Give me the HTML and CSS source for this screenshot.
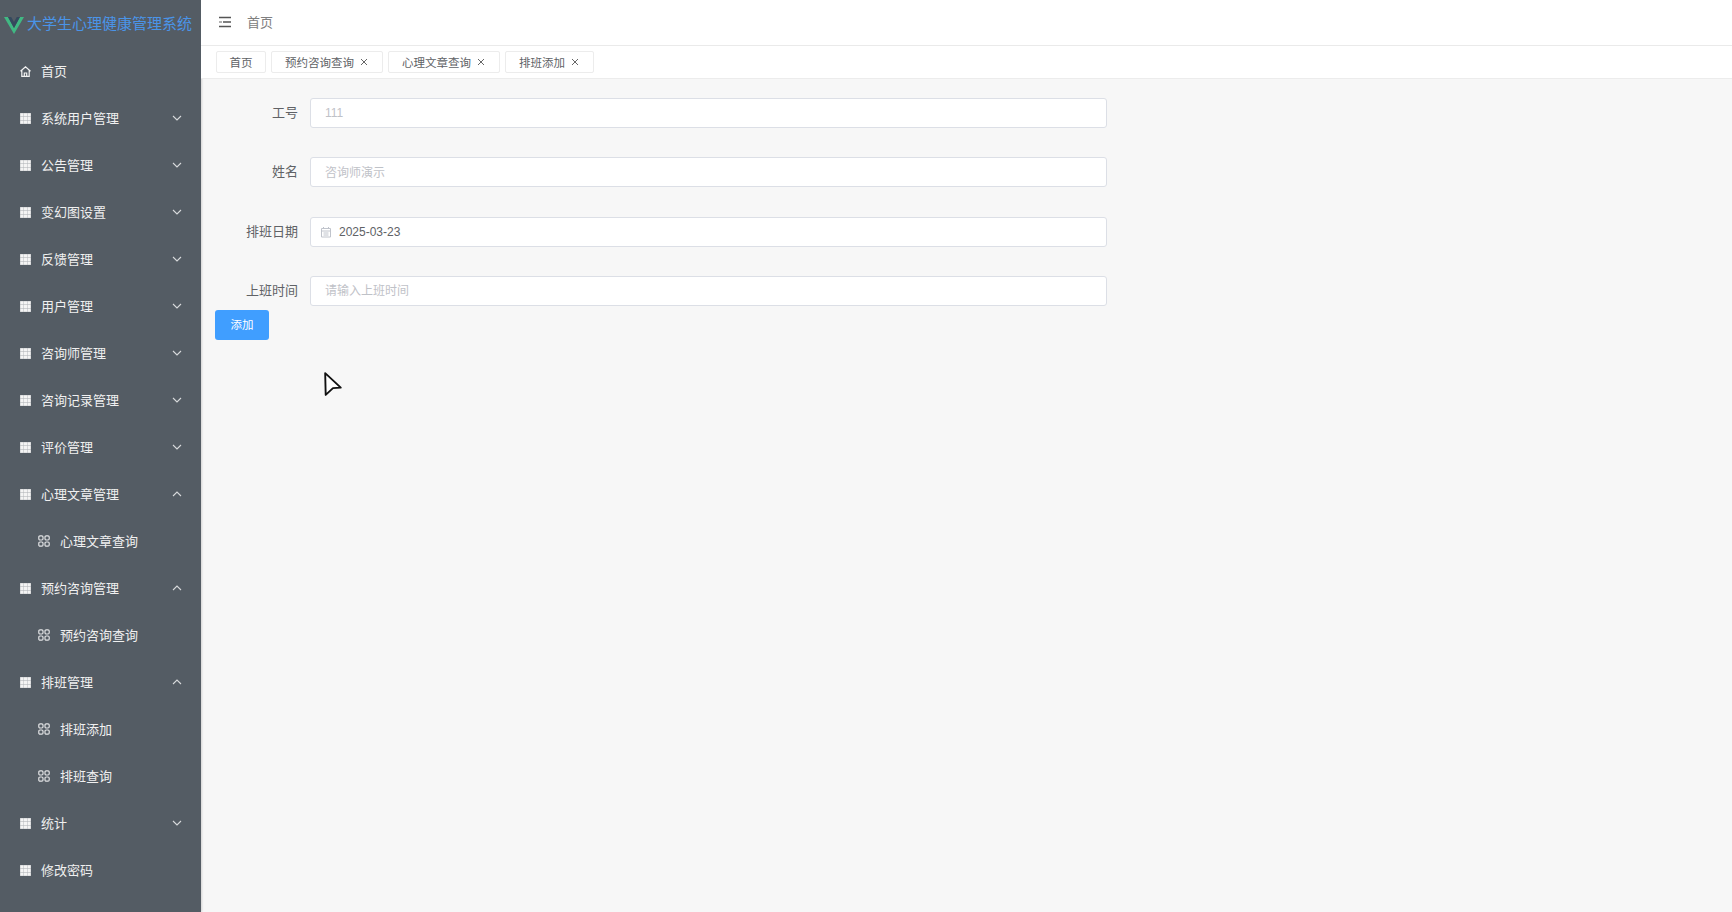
FILE: index.html
```html
<!DOCTYPE html>
<html lang="zh-CN">
<head>
<meta charset="utf-8">
<title>大学生心理健康管理系统</title>
<link rel="stylesheet" href="styles.css">
</head>
<body>
<svg class="defs" width="0" height="0" aria-hidden="true">
  <symbol id="grid" viewBox="0 0 11 11"><path d="M0 0h11v11H0z" fill="#a9adb1"/><path d="M.3 .3h3.200v3.200H.3zM3.900 .3h3.200v3.200H3.900zM7.500 .3h3.200v3.200H7.500zM.3 3.900h3.200v3.200H.3zM3.900 3.900h3.200v3.200H3.900zM7.500 3.900h3.200v3.200H7.500zM.3 7.500h3.200v3.200H.3zM3.900 7.500h3.200v3.200H3.900zM7.500 7.500h3.200v3.200H7.500z" fill="#f4f4f4"/></symbol>
  <symbol id="apps" viewBox="0 0 12 12"><g fill="none" stroke="#e2e3e5" stroke-width="1.200"><rect x=".8" y=".8" width="4.200" height="4.200" rx="1.200"/><rect x="7" y=".8" width="4.200" height="4.200" rx="1.200"/><rect x=".8" y="7" width="4.200" height="4.200" rx="1.200"/><rect x="7" y="7" width="4.200" height="4.200" rx="1.200"/></g></symbol>
  <symbol id="down" viewBox="0 0 10 6"><path d="M1 1l4 4 4-4" fill="none" stroke="#d8dadc" stroke-width="1.100"/></symbol>
  <symbol id="up" viewBox="0 0 10 6"><path d="M1 5l4-4 4 4" fill="none" stroke="#d8dadc" stroke-width="1.100"/></symbol>
  <symbol id="close" viewBox="0 0 8 8"><path d="M1 1l6 6M7 1L1 7" stroke="#666" stroke-width="1" fill="none"/></symbol>
</svg>
<div class="app">
  <aside class="sidebar">
    <div class="logo">
      <svg class="logo-mark" viewBox="0 0 20 17"><path d="M0 0h4l6 11 6-11h4L10 17z" fill="#41b883"/><path d="M4 0h3.200L10 5l2.800-5H16l-6 11z" fill="#35495e"/></svg>
      <span class="logo-text">大学生心理健康管理系统</span>
    </div>
    <nav class="menu">
      <a class="row"><svg class="ico" viewBox="0 0 11 11"><path d="M.5 5.300L5.500 .8l5 4.500M1.800 4.400v6h7.400v-6M4.300 10.200V7h2.400v3.200" fill="none" stroke="#f2f2f2" stroke-width="1.200"/></svg><span class="label">首页</span></a>
      <a class="row"><svg class="ico"><use href="#grid"/></svg><span class="label">系统用户管理</span><svg class="arrow"><use href="#down"/></svg></a>
      <a class="row"><svg class="ico"><use href="#grid"/></svg><span class="label">公告管理</span><svg class="arrow"><use href="#down"/></svg></a>
      <a class="row"><svg class="ico"><use href="#grid"/></svg><span class="label">变幻图设置</span><svg class="arrow"><use href="#down"/></svg></a>
      <a class="row"><svg class="ico"><use href="#grid"/></svg><span class="label">反馈管理</span><svg class="arrow"><use href="#down"/></svg></a>
      <a class="row"><svg class="ico"><use href="#grid"/></svg><span class="label">用户管理</span><svg class="arrow"><use href="#down"/></svg></a>
      <a class="row"><svg class="ico"><use href="#grid"/></svg><span class="label">咨询师管理</span><svg class="arrow"><use href="#down"/></svg></a>
      <a class="row"><svg class="ico"><use href="#grid"/></svg><span class="label">咨询记录管理</span><svg class="arrow"><use href="#down"/></svg></a>
      <a class="row"><svg class="ico"><use href="#grid"/></svg><span class="label">评价管理</span><svg class="arrow"><use href="#down"/></svg></a>
      <a class="row"><svg class="ico"><use href="#grid"/></svg><span class="label">心理文章管理</span><svg class="arrow"><use href="#up"/></svg></a>
      <a class="row sub"><svg class="ico"><use href="#apps"/></svg><span class="label">心理文章查询</span></a>
      <a class="row"><svg class="ico"><use href="#grid"/></svg><span class="label">预约咨询管理</span><svg class="arrow"><use href="#up"/></svg></a>
      <a class="row sub"><svg class="ico"><use href="#apps"/></svg><span class="label">预约咨询查询</span></a>
      <a class="row"><svg class="ico"><use href="#grid"/></svg><span class="label">排班管理</span><svg class="arrow"><use href="#up"/></svg></a>
      <a class="row sub"><svg class="ico"><use href="#apps"/></svg><span class="label">排班添加</span></a>
      <a class="row sub"><svg class="ico"><use href="#apps"/></svg><span class="label">排班查询</span></a>
      <a class="row"><svg class="ico"><use href="#grid"/></svg><span class="label">统计</span><svg class="arrow"><use href="#down"/></svg></a>
      <a class="row"><svg class="ico"><use href="#grid"/></svg><span class="label">修改密码</span></a>
    </nav>
  </aside>
  <main class="main">
    <header class="topbar">
      <svg class="fold" viewBox="0 0 14 12"><path d="M1 1.500h12M5 6h8M1 10.500h12" stroke="#555" stroke-width="1.300" fill="none"/><path d="M1 6h3" stroke="#888" stroke-width="1.300"/></svg>
      <span class="crumb">首页</span>
    </header>
    <div class="tabs">
      <span class="tab tab-home">首页</span>
      <span class="tab">预约咨询查询<svg class="tab-x"><use href="#close"/></svg></span>
      <span class="tab">心理文章查询<svg class="tab-x"><use href="#close"/></svg></span>
      <span class="tab">排班添加<svg class="tab-x"><use href="#close"/></svg></span>
    </div>
    <section class="content">
      <form class="form">
        <div class="field"><label class="field-label">工号</label><div class="input latin muted"><span class="input-text">111</span></div></div>
        <div class="field"><label class="field-label">姓名</label><div class="input muted"><span class="input-text">咨询师演示</span></div></div>
        <div class="field"><label class="field-label">排班日期</label><div class="input latin date"><svg class="cal" viewBox="0 0 12 12"><path d="M1.500 2.500h9v8.500h-9zM1.500 5h9M3.500 1v2M8.500 1v2M3.500 7h5M3.500 9h5" fill="none" stroke="#c0c4cc" stroke-width="1"/></svg><span class="input-text">2025-03-23</span></div></div>
        <div class="field"><label class="field-label">上班时间</label><div class="input muted"><span class="input-text">请输入上班时间</span></div></div>
      </form>
      <button class="btn" type="button">添加</button>
    </section>
    <svg class="cursor" viewBox="0 0 20 25"><path d="M2 2l15 14-7.500 .5L2.500 23z" fill="#fff" stroke="#111" stroke-width="1.800" stroke-linejoin="round"/></svg>
  </main>
</div>
</body>
</html>
```
FILE: styles.css
```css
* { box-sizing: border-box; }
html, body { margin: 0; height: 100%; }
body {
  font-family: "Noto Sans CJK SC", "Liberation Sans", sans-serif;
  overflow: hidden;
  background: #f7f7f7;
}
.defs { position: absolute; }
.app { display: flex; height: 912px; }

.sidebar {
  width: 201px;
  flex: none;
  background: #545c64;
  color: #f0f0f0;
  box-shadow: 1px 0 2px rgba(0, 0, 0, .15);
}
.logo {
  height: 47px;
  display: flex;
  align-items: center;
  padding: 0 0 2px 4px;
  gap: 3px;
}
.logo-mark { width: 20px; height: 17px; flex: none; margin-top: 5px; }
.logo-text { font-size: 15px; color: #4a94e8; white-space: nowrap; }
.row {
  height: 47px;
  display: flex;
  align-items: center;
  padding-left: 20px;
  font-size: 13px;
}
.row.sub { padding-left: 38px; }
.ico { width: 11px; height: 11px; flex: none; margin: 2px 10px 0 0; }
.sub .ico { width: 12px; height: 12px; margin: 0 10px 0 0; }
.label { white-space: nowrap; }
.arrow { width: 10px; height: 6px; margin-left: auto; margin-right: 19px; flex: none; }

.main { flex: 1; min-width: 0; display: flex; flex-direction: column; position: relative; }
.topbar {
  height: 46px;
  background: #fff;
  display: flex;
  align-items: center;
  padding-left: 17px;
  border-bottom: 1px solid #eaeaea;
}
.fold { width: 14px; height: 12px; margin-right: 15px; margin-top: -2px; }
.crumb { font-size: 13px; color: #808080; margin-top: -2px; }
.tabs {
  height: 33px;
  background: #fff;
  border-bottom: 1px solid #ececec;
  display: flex;
  align-items: flex-start;
  padding: 5px 0 0 15px;
  gap: 5px;
}
.tab {
  height: 22px;
  display: inline-flex;
  align-items: center;
  padding: 0 14px 0 13px;
  background: #fff;
  border: 1px solid #ececec;
  border-radius: 2px;
  font-size: 11.500px;
  color: #606266;
  white-space: nowrap;
}
.tab-home { padding: 0 12.500px; }
.tab-x { width: 8px; height: 8px; margin-left: 6px; }

.content { padding: 19px 0 0 14px; }
.form { display: flex; flex-direction: column; gap: 29.330px; }
.field { display: flex; align-items: center; }
.field-label {
  width: 95px;
  padding: 0 12px 3px 0;
  text-align: right;
  font-size: 13px;
  color: #606266;
  white-space: nowrap;
}
.input {
  width: 797px;
  height: 30px;
  background: #fff;
  border: 1px solid #dcdfe6;
  border-radius: 3px;
  padding: 0 14px;
  display: flex;
  align-items: center;
  font-size: 12px;
  color: #606266;
}
.input-text { margin-top: -2px; }
.latin { font-family: "Liberation Sans", sans-serif; }
.latin .input-text { margin-top: 0; }
.muted { color: #bfc2c8; }
.date { padding-left: 9px; }
.cal { width: 12px; height: 12px; margin-right: 7px; flex: none; }
.btn {
  display: block;
  margin-top: 4px;
  width: 54px;
  height: 30px;
  padding: 0 0 2px;
  border: 0;
  border-radius: 3px;
  background: #409eff;
  color: #fff;
  font: 11.500px "Noto Sans CJK SC", sans-serif;
}
.cursor { position: absolute; left: 122px; top: 371px; width: 21px; height: 26px; }
```
